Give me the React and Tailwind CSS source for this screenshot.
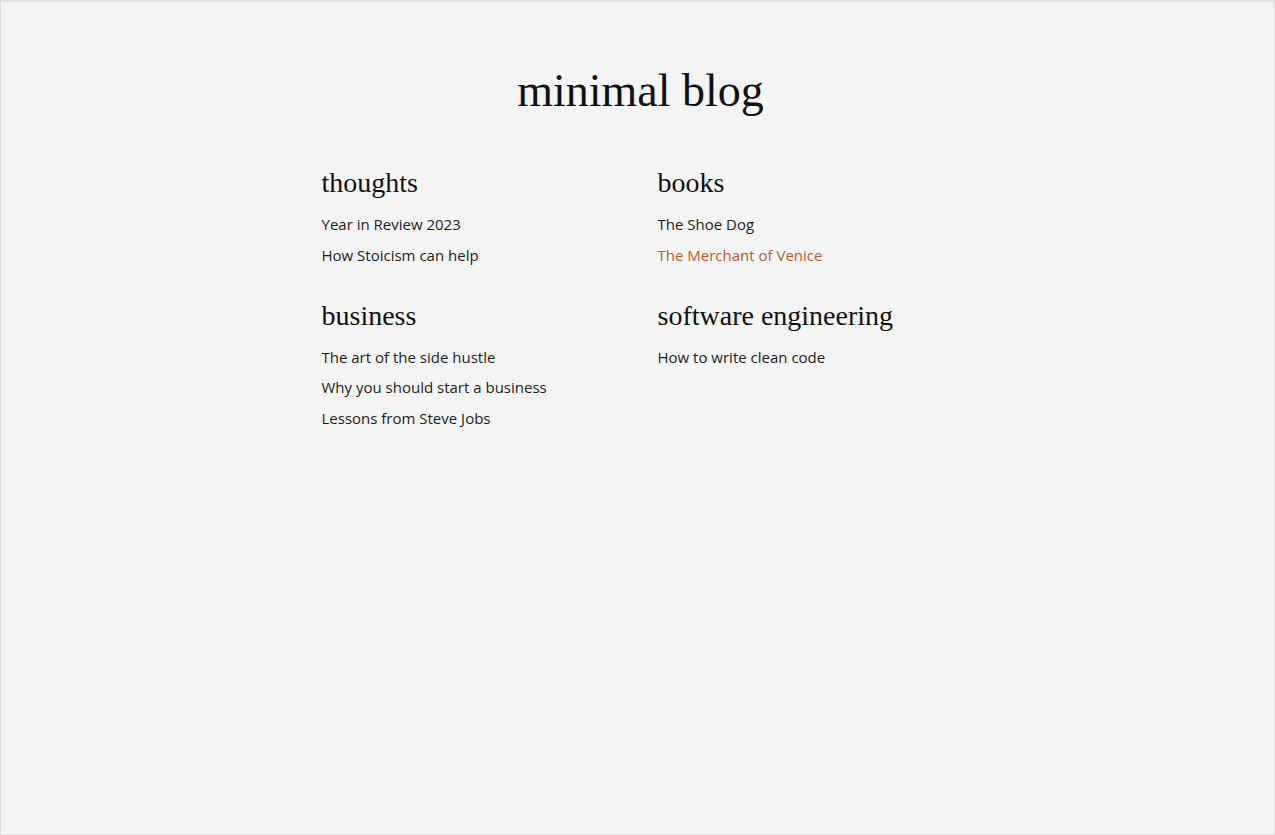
export default function App() {
  const serif = { fontFamily: '"Liberation Serif", "DejaVu Serif", serif' };
  const sans = { fontFamily: '"Open Sans", "Liberation Sans", sans-serif' };
  const sections = [
    { title: "thoughts", links: ["Year in Review 2023", "How Stoicism can help"] },
    { title: "books", links: ["The Shoe Dog", "The Merchant of Venice"], active: 1 },
    { title: "business", links: ["The art of the side hustle", "Why you should start a business", "Lessons from Steve Jobs"] },
    { title: "software engineering", links: ["How to write clean code"] },
  ];
  return (
    <div className="min-h-[835px] bg-[#f4f4f4] border border-[#dedede] border-t-2 border-t-[#e2e2e2]">
      <h1 className="text-center text-[46px] leading-none text-[#111] pt-[66px] pl-[6px]" style={serif}>
        minimal blog
      </h1>
      <div className="w-[632px] mx-auto mt-[52px] grid grid-cols-[336px_1fr] gap-y-[33px]">
        {sections.map((s) => (
          <div key={s.title}>
            <h2 className="text-[28px] leading-[34px] text-[#111]" style={serif}>
              {s.title}
            </h2>
            <ul className="mt-[13px] flex flex-col gap-[8.5px]">
              {s.links.map((l, i) => (
                <li
                  key={l}
                  className={`text-[15px] leading-[22px] ${s.active === i ? "text-[#b85c2a]" : "text-[#1c1c1c]"}`}
                  style={sans}
                >
                  {l}
                </li>
              ))}
            </ul>
          </div>
        ))}
      </div>
    </div>
  );
}
